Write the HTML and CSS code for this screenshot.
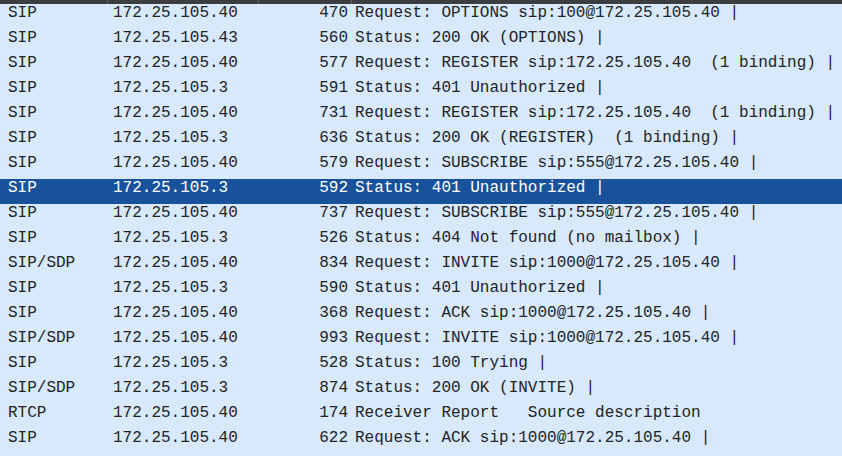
FILE: index.html
```html
<!DOCTYPE html>
<html>
<head>
<meta charset="utf-8">
<link rel="stylesheet" href="styles.css">
</head>
<body>
<div class="list">
  <div class="header">
    <div class="hcell"></div><div class="hcell"></div><div class="hcell"></div><div class="hcell last"></div>
  </div>
  <div class="row"><span class="proto">SIP</span><span class="src">172.25.105.40</span><span class="len">470</span><span class="info">Request: OPTIONS sip:100@172.25.105.40 |</span></div>
  <div class="row"><span class="proto">SIP</span><span class="src">172.25.105.43</span><span class="len">560</span><span class="info">Status: 200 OK (OPTIONS) |</span></div>
  <div class="row"><span class="proto">SIP</span><span class="src">172.25.105.40</span><span class="len">577</span><span class="info">Request: REGISTER sip:172.25.105.40  (1 binding) |</span></div>
  <div class="row"><span class="proto">SIP</span><span class="src">172.25.105.3</span><span class="len">591</span><span class="info">Status: 401 Unauthorized |</span></div>
  <div class="row"><span class="proto">SIP</span><span class="src">172.25.105.40</span><span class="len">731</span><span class="info">Request: REGISTER sip:172.25.105.40  (1 binding) |</span></div>
  <div class="row"><span class="proto">SIP</span><span class="src">172.25.105.3</span><span class="len">636</span><span class="info">Status: 200 OK (REGISTER)  (1 binding) |</span></div>
  <div class="row"><span class="proto">SIP</span><span class="src">172.25.105.40</span><span class="len">579</span><span class="info">Request: SUBSCRIBE sip:555@172.25.105.40 |</span></div>
  <div class="row selected"><span class="proto">SIP</span><span class="src">172.25.105.3</span><span class="len">592</span><span class="info">Status: 401 Unauthorized |</span></div>
  <div class="row"><span class="proto">SIP</span><span class="src">172.25.105.40</span><span class="len">737</span><span class="info">Request: SUBSCRIBE sip:555@172.25.105.40 |</span></div>
  <div class="row"><span class="proto">SIP</span><span class="src">172.25.105.3</span><span class="len">526</span><span class="info">Status: 404 Not found (no mailbox) |</span></div>
  <div class="row"><span class="proto">SIP/SDP</span><span class="src">172.25.105.40</span><span class="len">834</span><span class="info">Request: INVITE sip:1000@172.25.105.40 |</span></div>
  <div class="row"><span class="proto">SIP</span><span class="src">172.25.105.3</span><span class="len">590</span><span class="info">Status: 401 Unauthorized |</span></div>
  <div class="row"><span class="proto">SIP</span><span class="src">172.25.105.40</span><span class="len">368</span><span class="info">Request: ACK sip:1000@172.25.105.40 |</span></div>
  <div class="row"><span class="proto">SIP/SDP</span><span class="src">172.25.105.40</span><span class="len">993</span><span class="info">Request: INVITE sip:1000@172.25.105.40 |</span></div>
  <div class="row"><span class="proto">SIP</span><span class="src">172.25.105.3</span><span class="len">528</span><span class="info">Status: 100 Trying |</span></div>
  <div class="row"><span class="proto">SIP/SDP</span><span class="src">172.25.105.3</span><span class="len">874</span><span class="info">Status: 200 OK (INVITE) |</span></div>
  <div class="row"><span class="proto">RTCP</span><span class="src">172.25.105.40</span><span class="len">174</span><span class="info">Receiver Report   Source description</span></div>
  <div class="row"><span class="proto">SIP</span><span class="src">172.25.105.40</span><span class="len">622</span><span class="info">Request: ACK sip:1000@172.25.105.40 |</span></div>
</div>
</body>
</html>
```

FILE: styles.css
```css
* { box-sizing: border-box; }
html, body {
  margin: 0;
  padding: 0;
  width: 842px;
  height: 456px;
  overflow: hidden;
  background: #d8e9fb;
}
.list {
  display: flex;
  flex-direction: column;
  font-family: "Liberation Mono", "DejaVu Sans Mono", monospace;
  font-size: 16px;
  color: #222426;
}
.header {
  display: grid;
  grid-template-columns: 108px 151px 93px 1fr;
  height: 4px;
  background: #3b3d40;
}
.hcell { border-right: 1px solid #5a5d61; }
.hcell.last { border-right: none; }
.row {
  display: grid;
  grid-template-columns: 108px 151px 93px 1fr;
  height: 25px;
  align-items: center;
  padding-bottom: 9px;
  white-space: pre;
}
.row.selected {
  background: #17529b;
  color: #ffffff;
}
.proto { padding-left: 8px; }
.src { padding-left: 5px; }
.len { text-align: right; padding-right: 4px; }
.info { padding-left: 3px; }
```
